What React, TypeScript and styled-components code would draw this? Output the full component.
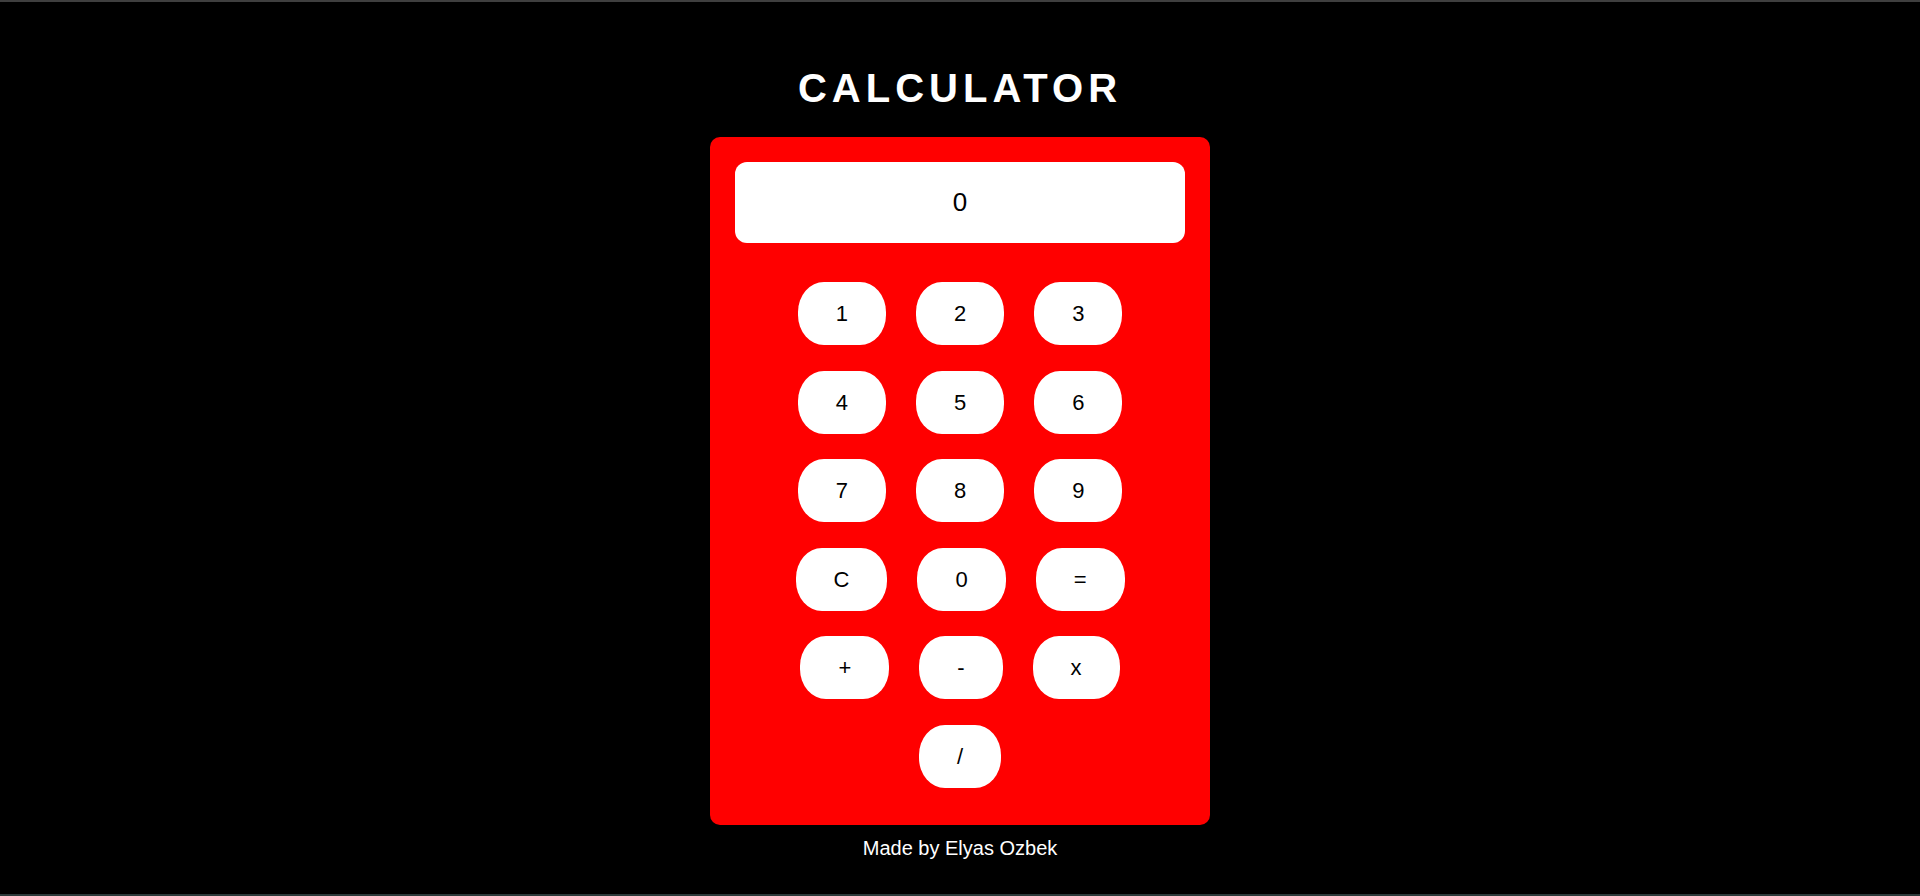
import React, { useState } from 'react'
import styled, { createGlobalStyle } from 'styled-components'

const keyRows = [
  ['1', '2', '3'],
  ['4', '5', '6'],
  ['7', '8', '9'],
  ['C', '0', '='],
  ['+', '-', 'x'],
  ['/'],
]

const evaluate = (expr: string) => {
  try {
    // eslint-disable-next-line no-new-func
    const result = Function(`"use strict"; return (${expr.replace(/x/g, '*')})`)()
    return String(result)
  } catch {
    return 'Error'
  }
}

export const App = () => {
  const [value, setValue] = useState('0')

  const handleKey = (key: string) => {
    if (key === 'C') return setValue('0')
    if (key === '=') return setValue(evaluate(value))
    setValue((prev) => (prev === '0' || prev === 'Error' ? key : prev + key))
  }

  return (
    <Page>
      <GlobalStyle />
      <Title>CALCULATOR</Title>

      <Calculator>
        <Display>{value}</Display>

        <Keypad>
          {keyRows.map((row, i) => (
            <KeyRow key={i}>
              {row.map((key) => (
                <Key key={key} onClick={() => handleKey(key)}>
                  {key}
                </Key>
              ))}
            </KeyRow>
          ))}
        </Keypad>
      </Calculator>

      <Footer>Made by Elyas Ozbek</Footer>
    </Page>
  )
}

export default App

const GlobalStyle = createGlobalStyle`
  * {
    box-sizing: border-box;
  }
  html, body {
    margin: 0;
    padding: 0;
    background: #000;
  }
  body {
    font-family: "Liberation Sans", Arial, sans-serif;
  }
`
const Page = styled.div`
  display: flex;
  flex-direction: column;
  align-items: center;
  height: 100vh;
  padding-top: 63px;
  background: #000;
  border-top: 2px solid #3f3f3f;
  border-bottom: 2px solid #2b3939;
`
const Title = styled.h1`
  margin: 0;
  color: #fff;
  font-size: 40px;
  font-weight: bold;
  line-height: 46px;
  letter-spacing: 5px;
`
const Calculator = styled.div`
  width: 500px;
  margin-top: 26px;
  padding: 25px 25px 37.5px;
  background: #ff0000;
  border-radius: 10px;
`
const Display = styled.div`
  height: 81px;
  display: flex;
  align-items: center;
  justify-content: center;
  background: #fff;
  border-radius: 12px;
  color: #000;
  font-size: 26px;
`
const Keypad = styled.div`
  display: flex;
  flex-direction: column;
  gap: 25.5px;
  margin-top: 39px;
`
const KeyRow = styled.div`
  display: flex;
  justify-content: center;
  gap: 30px;
`
const Key = styled.button`
  height: 63px;
  padding: 0 38px;
  border: none;
  border-radius: 26px / 30px;
  background: #fff;
  color: #000;
  font-family: "Liberation Sans", Arial, sans-serif;
  font-size: 22px;
  line-height: 25px;
  cursor: pointer;
`
const Footer = styled.p`
  margin: 12px 0 0;
  color: #fff;
  font-size: 20px;
  line-height: 23px;
`
